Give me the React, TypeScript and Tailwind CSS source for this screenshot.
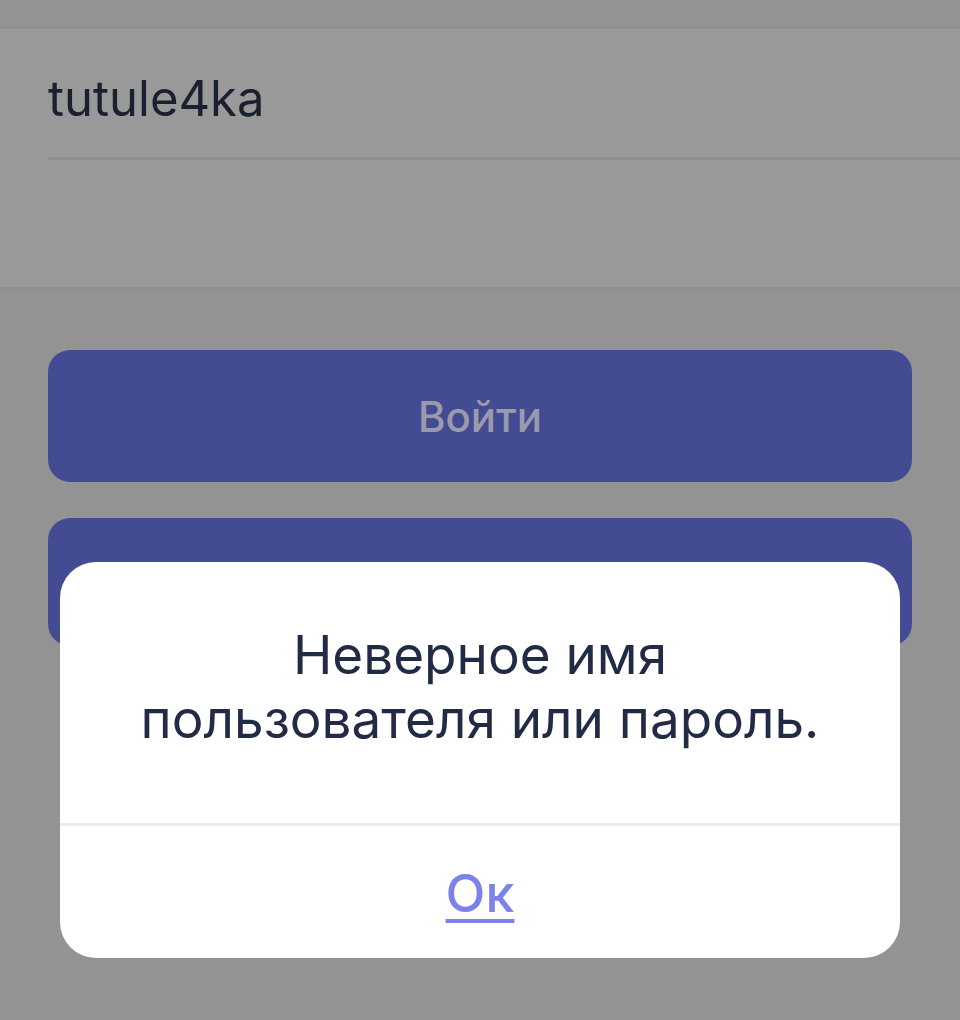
export default function App() {
  return (
    <div className="relative min-h-[1020px] w-full overflow-hidden bg-[#939393] font-['Inter','Noto_Sans',sans-serif]">
      {/* form fields */}
      <div className="pt-[26px]">
        <div className="border-y-[3px] border-[#8e8e93] bg-[#999999]">
          <div className="pl-12">
            <div className="flex h-[131px] items-center border-b-[3px] border-[#8f8f95] pt-[12px] text-[49px] text-[#1b2030]">
              tutule4ka
            </div>
            <div className="h-[127px]" />
          </div>
        </div>
      </div>

      {/* buttons */}
      <div className="flex flex-col gap-9 px-12 pt-[60px]">
        <button className="flex h-[132px] items-center justify-center rounded-[22px] bg-[#434c92] text-[42px] font-medium text-[#9a9aab]">
          Войти
        </button>
        <button className="h-[128px] rounded-[22px] bg-[#434c92]" />
      </div>

      {/* alert */}
      <div className="absolute left-[60px] right-[60px] top-[562px] overflow-hidden rounded-[36px] bg-white">
        <div className="flex h-[261px] flex-col items-center justify-center pb-[12px] text-center text-[53px] leading-[64px] text-[#222b45]">
          <div>Неверное имя</div>
          <div>пользователя или пароль.</div>
        </div>
        <div className="h-[3px] bg-[#ebebef]" />
        <div className="flex h-[132px] items-center justify-center pt-[4px]">
          <button className="text-[52px] font-medium text-[#7b83eb] underline decoration-[4px] underline-offset-[7px]">
            Ок
          </button>
        </div>
      </div>
    </div>
  );
}
